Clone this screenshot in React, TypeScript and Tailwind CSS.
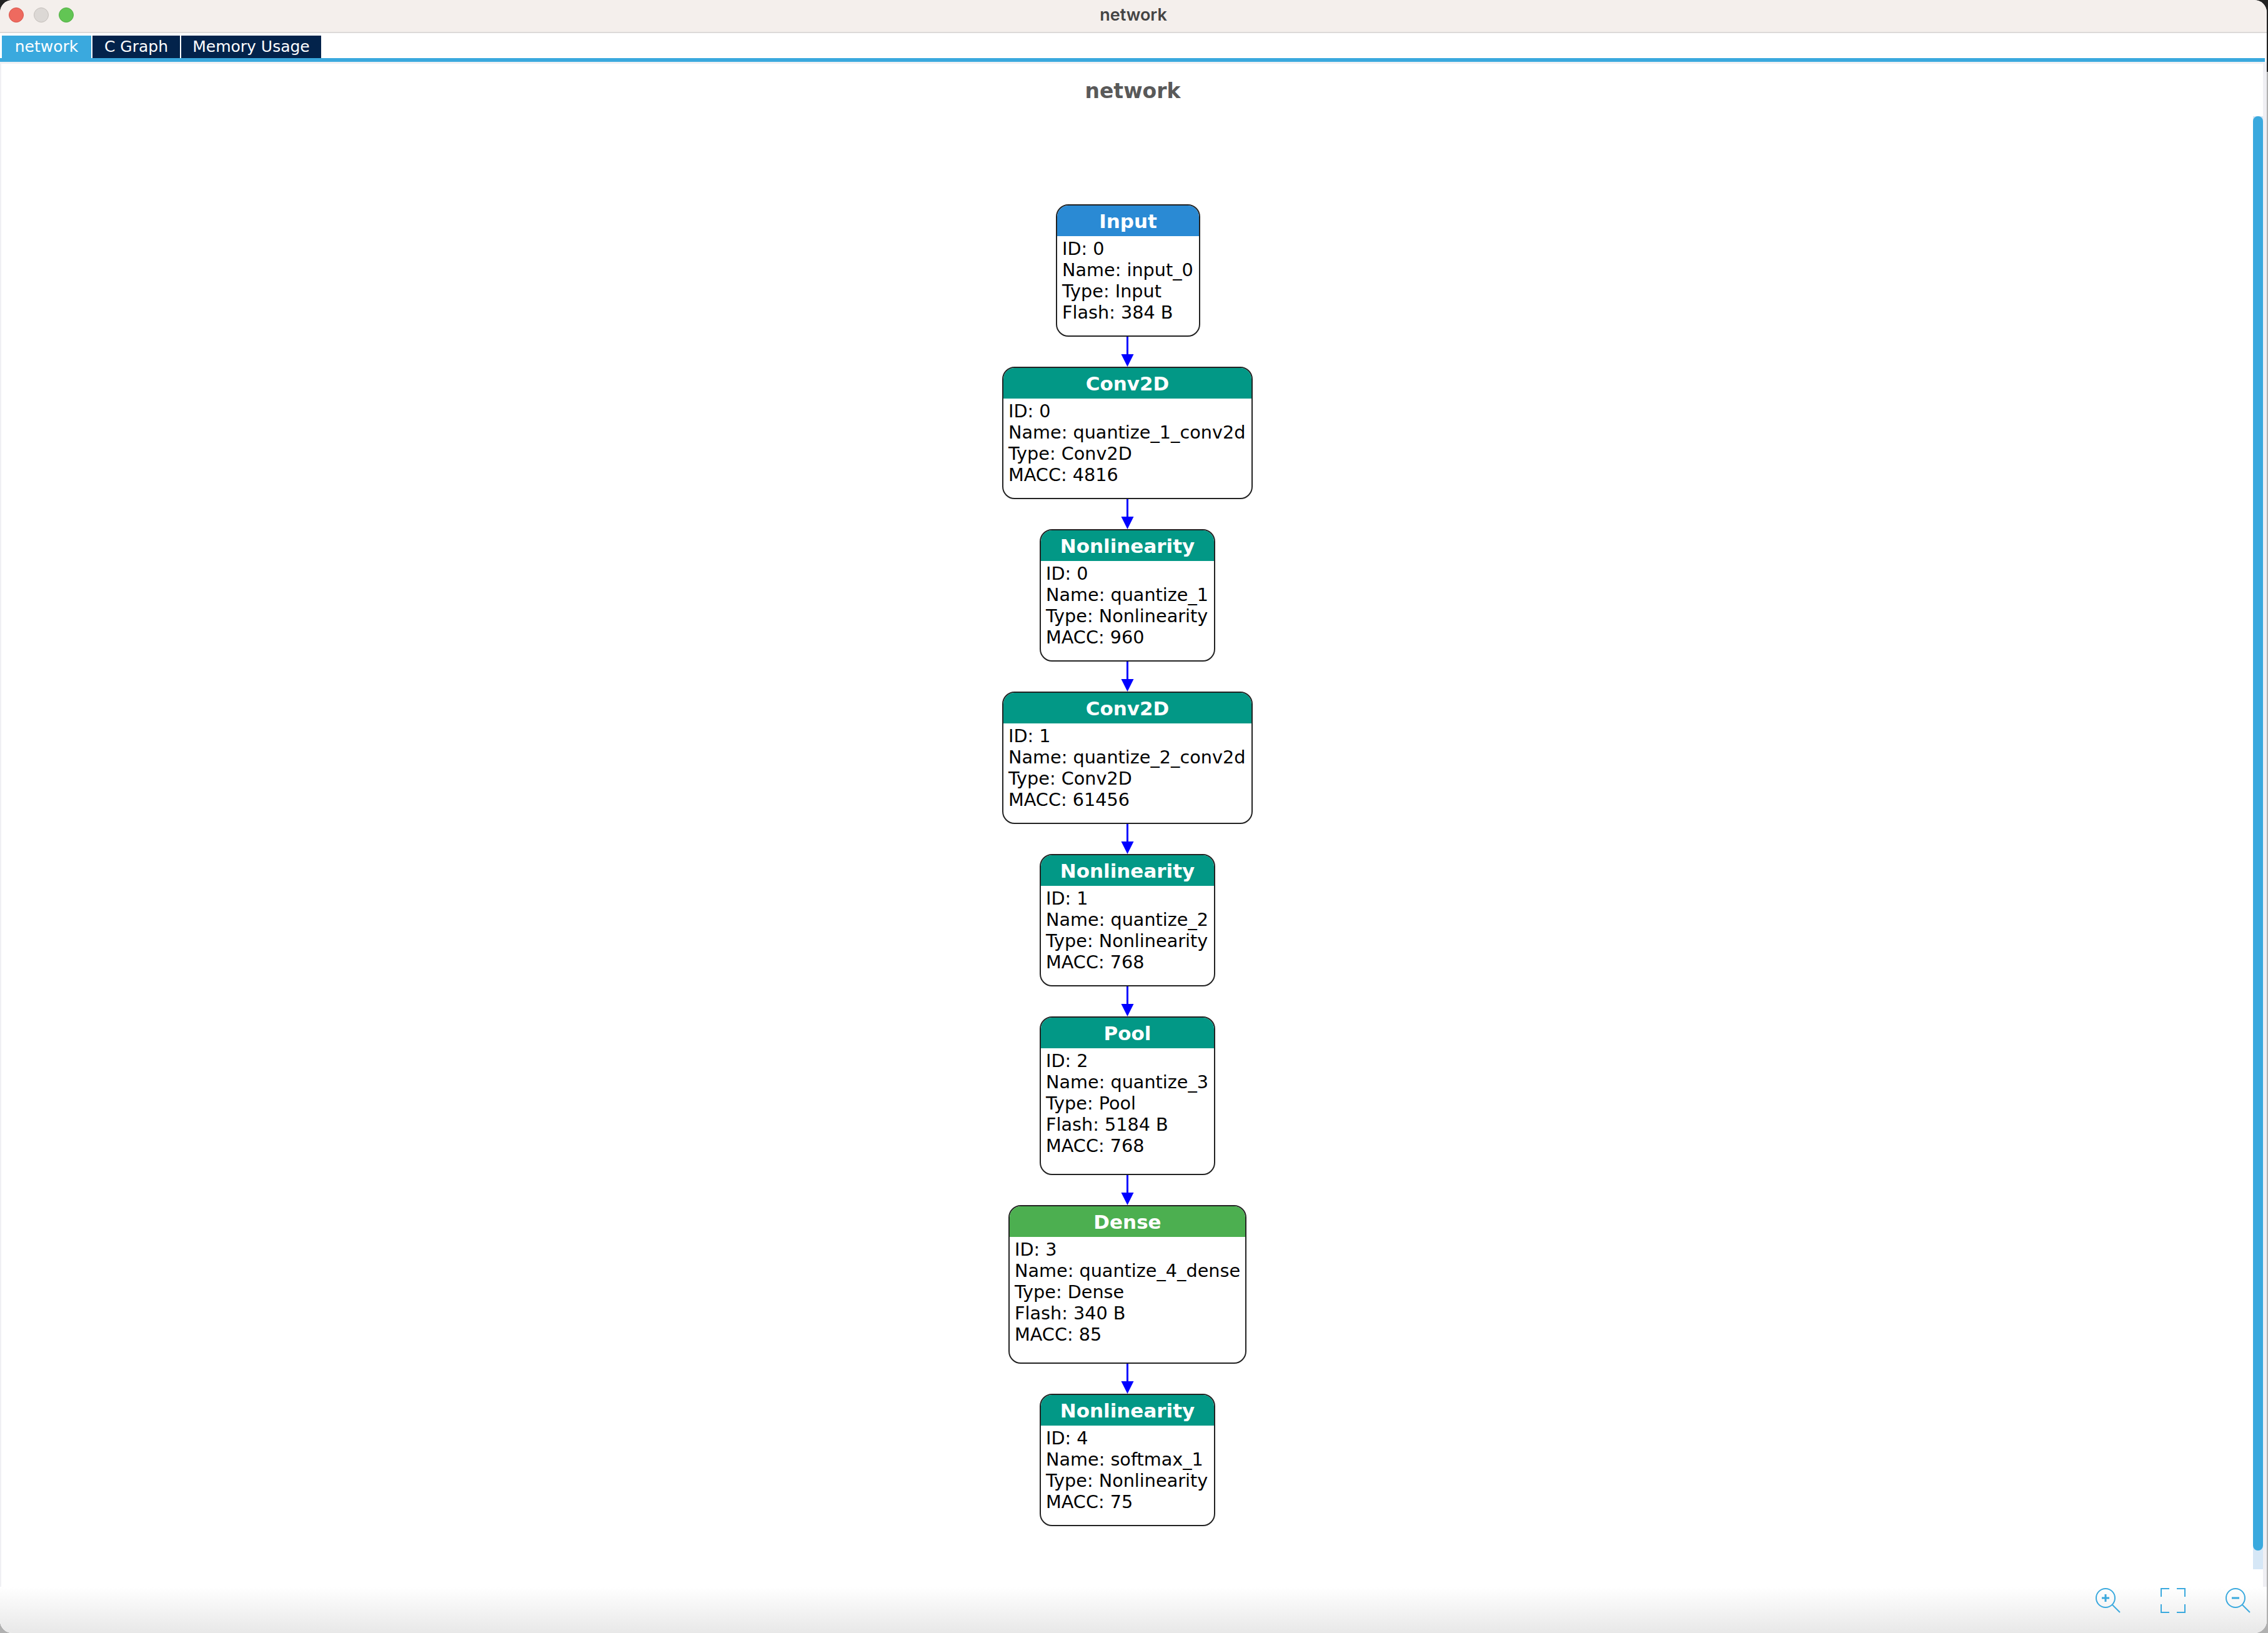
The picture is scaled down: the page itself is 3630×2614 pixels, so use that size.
const nodes = [
  { title: "Input", head: "bg-[#2a8ad4]", width: "w-[231px] ml-[2px]", height: "h-[212px]", rows: ["ID: 0", "Name: input_0", "Type: Input", "Flash: 384 B"] },
  { title: "Conv2D", head: "bg-[#029886]", width: "w-[401px]", height: "h-[212px]", rows: ["ID: 0", "Name: quantize_1_conv2d", "Type: Conv2D", "MACC: 4816"] },
  { title: "Nonlinearity", head: "bg-[#029886]", width: "w-[281px]", height: "h-[212px]", rows: ["ID: 0", "Name: quantize_1", "Type: Nonlinearity", "MACC: 960"] },
  { title: "Conv2D", head: "bg-[#029886]", width: "w-[401px]", height: "h-[212px]", rows: ["ID: 1", "Name: quantize_2_conv2d", "Type: Conv2D", "MACC: 61456"] },
  { title: "Nonlinearity", head: "bg-[#029886]", width: "w-[281px]", height: "h-[212px]", rows: ["ID: 1", "Name: quantize_2", "Type: Nonlinearity", "MACC: 768"] },
  { title: "Pool", head: "bg-[#029886]", width: "w-[281px]", height: "h-[254px]", rows: ["ID: 2", "Name: quantize_3", "Type: Pool", "Flash: 5184 B", "MACC: 768"] },
  { title: "Dense", head: "bg-[#4caf50]", width: "w-[381px]", height: "h-[254px]", rows: ["ID: 3", "Name: quantize_4_dense", "Type: Dense", "Flash: 340 B", "MACC: 85"] },
  { title: "Nonlinearity", head: "bg-[#029886]", width: "w-[281px]", height: "h-[212px]", rows: ["ID: 4", "Name: softmax_1", "Type: Nonlinearity", "MACC: 75"] },
];

function Arrow() {
  return (
    <svg width="21" height="48" viewBox="0 0 21 48" className="block">
      <line x1="10.5" y1="0" x2="10.5" y2="30" stroke="#0000ff" strokeWidth="3" />
      <polygon points="0.5,28 20.5,28 10.5,48" fill="#0000ff" />
    </svg>
  );
}

function Node({ node }: { node: (typeof nodes)[number] }) {
  return (
    <div className={`${node.width} ${node.height} rounded-[20px] border-2 border-[#222222] overflow-hidden bg-white`}>
      <div className={`${node.head} h-[49px] pt-[2px] flex items-center justify-center text-white font-bold text-[31px]`}>
        {node.title}
      </div>
      <div className="pt-[3px] pl-[8px] text-black text-[28.7px] leading-[34px] whitespace-nowrap">
        {node.rows.map((row) => (
          <div key={row}>{row}</div>
        ))}
      </div>
    </div>
  );
}

export default function App() {
  return (
    <div className="relative w-[3630px] h-[2614px] bg-[#b0b0b0] overflow-hidden font-['DejaVu_Sans',sans-serif]">
      <div className="absolute inset-x-0 top-0 h-[115px] bg-[#222222]" />
      <div className="relative w-[3628px] h-[2614px] flex flex-col bg-white rounded-[20px] overflow-hidden">
        {/* Title bar */}
        <div className="relative h-[53px] shrink-0 bg-[#f4efec] border-b-2 border-[#dcd9d8] flex items-center justify-center">
          <div className="absolute left-[14px] top-[12px] flex gap-[16px]">
            <span className="w-[24px] h-[24px] rounded-full bg-[#ee6a5f] border border-[#d9544a]" />
            <span className="w-[24px] h-[24px] rounded-full bg-[#dcd8d5] border border-[#c4bfbb]" />
            <span className="w-[24px] h-[24px] rounded-full bg-[#62c554] border border-[#52ae45]" />
          </div>
          <span className="-mt-[3px] font-['Inter',sans-serif] font-semibold text-[27px] text-[#444444]">network</span>
        </div>

        {/* Tabs */}
        <div className="h-[40px] shrink-0 pl-[3px] pt-[4px] flex items-stretch gap-[2px] text-white text-[25px] bg-white">
          <div className="w-[143px] bg-[#3aa9de] flex items-center justify-center">network</div>
          <div className="w-[140px] bg-[#03234b] flex items-center justify-center">C Graph</div>
          <div className="w-[224px] bg-[#03234b] flex items-center justify-center">Memory Usage</div>
        </div>
        <div className="h-[6px] shrink-0 bg-[#3aa9de] mr-[3px]" />
        <div className="h-[3px] shrink-0 bg-[#f0f0f3]" />

        {/* Canvas */}
        <div className="flex-1 border-l-2 border-[#f0f0f3] bg-white">
          <div className="pt-[22px] pr-[4px] h-[64px] flex items-center justify-center text-[33px] leading-none font-bold text-[#595959]">
            network
          </div>
          <div className="mt-[161px] pr-[21px] flex flex-col items-center">
            {nodes.map((node, i) => (
              <div key={i} className="flex flex-col items-center">
                {i > 0 && <Arrow />}
                <Node node={node} />
              </div>
            ))}
          </div>
        </div>

        {/* Scrollbar */}
        <div className="absolute right-[6px] top-[186px] w-[16px] h-[2326px] bg-[#d6e7f6]">
          <div className="h-[2296px] rounded-[8px] bg-[#3aa9de]" />
        </div>
        <div className="absolute right-0 top-[102px] bottom-0 w-[6px] bg-[#efeff3]" />

        {/* Bottom fade and zoom controls */}
        <div className="absolute left-0 right-0 bottom-0 h-[74px] bg-gradient-to-b from-white to-[#e8e8e8]" />
        <div className="absolute right-[26px] bottom-[32px] flex gap-[64px] text-[#3aa9de]">
          <svg width="40" height="40" viewBox="0 0 40 40" fill="none" stroke="currentColor" strokeWidth="2">
            <circle cx="16" cy="16" r="15" />
            <line x1="27" y1="27" x2="39" y2="39" />
            <line x1="10" y1="16" x2="22" y2="16" strokeWidth="3" />
            <line x1="16" y1="10" x2="16" y2="22" strokeWidth="3" />
          </svg>
          <svg width="40" height="40" viewBox="0 0 40 40" fill="none" stroke="currentColor" strokeWidth="2">
            <path d="M1 14V1H14M26 1H39V14M39 26V39H26M14 39H1V26" />
          </svg>
          <svg width="40" height="40" viewBox="0 0 40 40" fill="none" stroke="currentColor" strokeWidth="2">
            <circle cx="16" cy="16" r="15" />
            <line x1="27" y1="27" x2="39" y2="39" />
            <line x1="10" y1="16" x2="22" y2="16" strokeWidth="3" />
          </svg>
        </div>
      </div>
    </div>
  );
}
